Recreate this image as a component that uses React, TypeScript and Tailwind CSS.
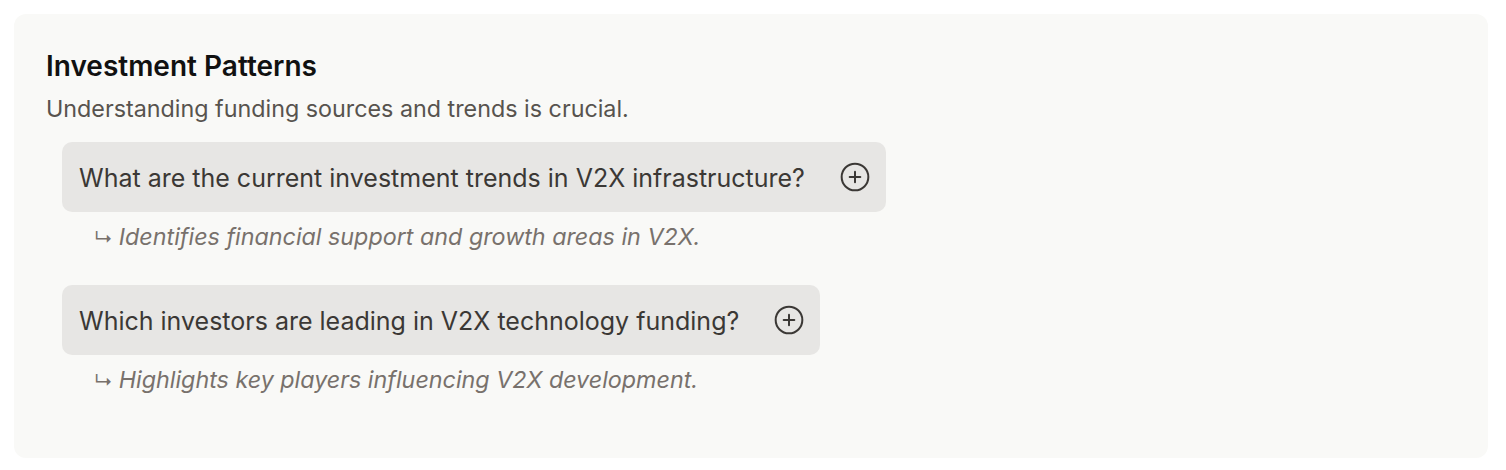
import { PlusCircle } from 'lucide-react';

const QUESTIONS = [
  {
    q: 'What are the current investment trends in V2X infrastructure?',
    a: 'Identifies financial support and growth areas in V2X.',
  },
  {
    q: 'Which investors are leading in V2X technology funding?',
    a: 'Highlights key players influencing V2X development.',
  },
];

export default function App() {
  return (
    <div className="min-h-[470px] bg-white p-[14px] pr-[18px] font-['Inter',sans-serif]">
      <div className="h-[444px] rounded-xl bg-[#f9f9f7] px-8 pt-[34px]">
        <h2 className="text-[28px] font-semibold leading-[36px] text-[#111]">Investment Patterns</h2>
        <p className="mt-[9px] text-[23.3px] leading-[32px] text-[#57534e]">Understanding funding sources and trends is crucial.</p>
        <div className="mt-[17px] flex flex-col items-start pl-4">
          {QUESTIONS.map((item, i) => (
            <div key={i} className={i > 0 ? 'mt-[32px]' : ''}>
              <div className="flex h-[70px] items-center gap-[34px] rounded-[10px] bg-[#e7e6e4] pl-[17px] pr-[15px]">
                <span className="pt-[3px] text-[25px] text-[#3b3835]">{item.q}</span>
                <PlusCircle className="h-[32px] w-[32px] text-[#3b3835]" strokeWidth={1.5} />
              </div>
              <p className="mt-[9px] flex h-[32px] items-baseline overflow-hidden pl-[32px] text-[23.3px] italic leading-[32px] text-[#78716c]">
                <span className="mr-[6px] text-[19px] leading-[32px] not-italic">↳</span>
                <span>{item.a}</span>
              </p>
            </div>
          ))}
        </div>
      </div>
    </div>
  );
}
